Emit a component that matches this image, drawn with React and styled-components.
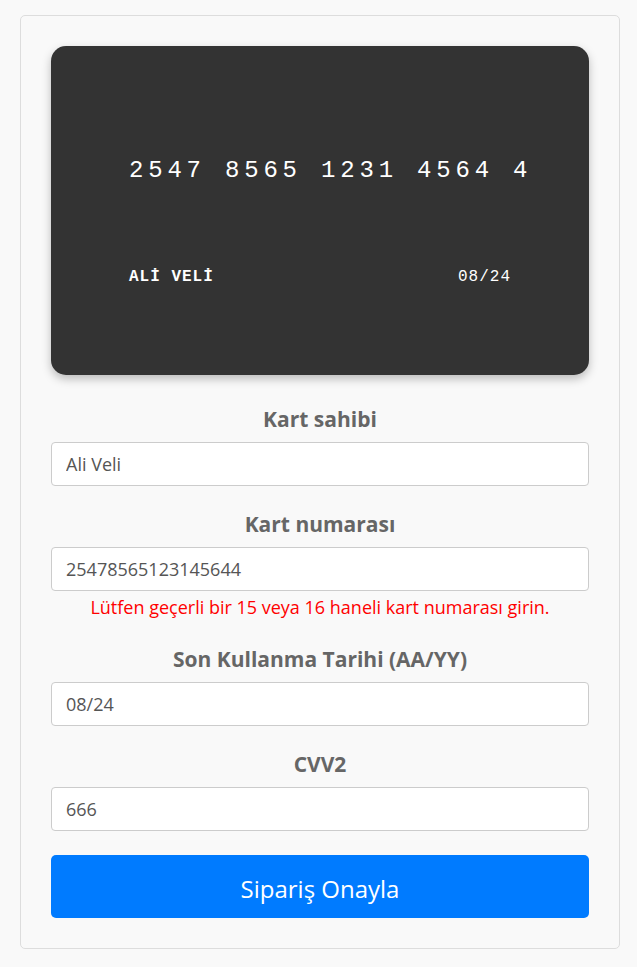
import React from "react";
import styled, { createGlobalStyle } from "styled-components";

const Global = createGlobalStyle`
  html, body { margin: 0; padding: 0; background: #f9f9f9; }
  body { font-family: "Open Sans", "Noto Sans", sans-serif; }
  * { box-sizing: border-box; }
`;

const Container = styled.div`
  width: 600px;
  margin: 15px 20px 0;
  padding: 30px;
  background: #f9f9f9;
  border: 1px solid #ddd;
  border-radius: 5px;
  display: flex;
  flex-direction: column;
`;

const Card = styled.div`
  height: 329px;
  background: #333;
  border-radius: 15px;
  box-shadow: 0 4px 10px rgba(0, 0, 0, 0.25);
  color: #fff;
  font-family: "Courier New", "Liberation Mono", monospace;
  padding: 111px 78px 0;
  display: flex;
  flex-direction: column;
`;

const CardNumber = styled.div`
  font-size: 24px;
  letter-spacing: 0.2em;
  white-space: nowrap;
`;

const CardFooter = styled.div`
  margin-top: 84px;
  display: flex;
  justify-content: space-between;
  font-size: 16px;
  letter-spacing: 1px;
`;

const Holder = styled.span`
  font-weight: bold;
`;

const Expiry = styled.span``;

const Form = styled.div`
  margin-top: 30px;
  display: flex;
  flex-direction: column;
`;

const Field = styled.div`
  display: flex;
  flex-direction: column;
  margin-bottom: 24px;
`;

const Label = styled.label`
  text-align: center;
  font-weight: bold;
  font-size: 21px;
  line-height: 28px;
  color: #666;
  margin-bottom: 9px;
`;

const Input = styled.input`
  height: 44px;
  width: 100%;
  padding: 0 14px;
  border: 1px solid #ccc;
  border-radius: 4px;
  background: #fff;
  font-family: "Open Sans", sans-serif;
  font-size: 18px;
  color: #555;
  outline: none;
`;

const ErrorText = styled.div`
  color: red;
  font-size: 18px;
  line-height: 24px;
  text-align: center;
  margin-top: 4px;
  margin-bottom: 2px;
`;

const Button = styled.button`
  height: 63px;
  width: 100%;
  padding: 3px 0 0;
  border: none;
  border-radius: 5px;
  background: #007bff;
  color: #fff;
  font-family: "Open Sans", sans-serif;
  font-size: 24px;
  cursor: pointer;
`;

export default function App() {
  return (
    <>
      <Global />
      <Container>
        <Card>
          <CardNumber>2547 8565 1231 4564 4</CardNumber>
          <CardFooter>
            <Holder>ALİ VELİ</Holder>
            <Expiry>08/24</Expiry>
          </CardFooter>
        </Card>
        <Form>
          <Field>
            <Label>Kart sahibi</Label>
            <Input defaultValue="Ali Veli" />
          </Field>
          <Field>
            <Label>Kart numarası</Label>
            <Input defaultValue="25478565123145644" />
            <ErrorText>Lütfen geçerli bir 15 veya 16 haneli kart numarası girin.</ErrorText>
          </Field>
          <Field>
            <Label>Son Kullanma Tarihi (AA/YY)</Label>
            <Input defaultValue="08/24" />
          </Field>
          <Field>
            <Label>CVV2</Label>
            <Input defaultValue="666" />
          </Field>
          <Button>Sipariş Onayla</Button>
        </Form>
      </Container>
    </>
  );
}
